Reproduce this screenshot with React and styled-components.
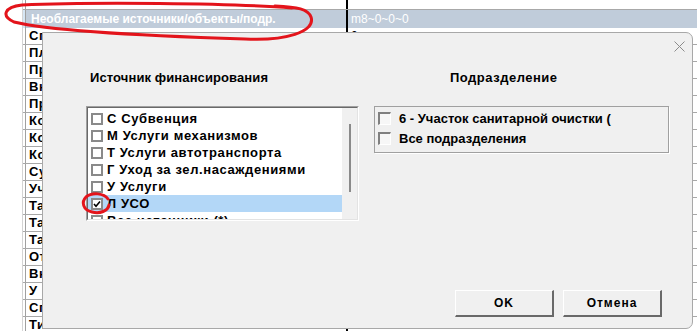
import React from 'react';
import styled, { createGlobalStyle } from 'styled-components';

const GlobalStyle = createGlobalStyle`
	html, body {
		margin: 0;
		padding: 0;
		background: #ffffff;
	}
	body {
		font-family: 'Liberation Sans', Arial, sans-serif;
	}
`;

const Page = styled.div`
	position: relative;
	width: 697px;
	height: 331px;
	overflow: hidden;
	background: #ffffff;
`;

const Grid = styled.div`
	display: flex;
	flex-direction: column;
	margin-top: -7px;
	margin-left: 22px;
	border-left: 1px solid #d4d4d4;
`;

const Row = styled.div`
	display: flex;
	box-sizing: border-box;
	border-bottom: ${(p) => (p.$head ? 'none' : '1px solid #a8a8a8')};
	background: ${(p) => (p.$head ? '#c0ccda' : '#ffffff')};
	height: ${(p) => (p.$head ? '18px' : '17px')};
`;

const LeadCell = styled.div`
	width: 2px;
	border-right: 1px solid #a0a0a0;
	background: ${(p) => (p.$head ? '#d6e6f4' : '#ffffff')};
`;

const Cell = styled.div`
	width: 320px;
	box-sizing: border-box;
	padding-left: ${(p) => (p.$head ? '5px' : '3px')};
	font-size: ${(p) => (p.$head ? '12px' : '13px')};
	font-weight: bold;
	letter-spacing: ${(p) => (p.$head ? '0' : '0.5px')};
	line-height: ${(p) => (p.$head ? '18px' : '16px')};
	color: ${(p) => (p.$head ? '#ffffff' : '#000000')};
	white-space: nowrap;
	overflow: hidden;
`;

const ValueCell = styled.div`
	flex: 1;
	border-left: 2px solid #000000;
	padding-left: 3px;
	font-size: 12px;
	line-height: ${(p) => (p.$head ? '18px' : '16px')};
	color: ${(p) => (p.$head ? '#ffffff' : '#000000')};
	white-space: nowrap;
`;

const Dialog = styled.div`
	position: absolute;
	left: 42px;
	top: 32px;
	width: 651px;
	height: 297px;
	box-sizing: border-box;
	border: 1px solid #a8a8a8;
	border-radius: 0 7px 7px 0;
	background: #f0f0f0;
	display: flex;
	flex-direction: column;
	font-family: 'Liberation Sans', Arial, sans-serif;
`;

const TitleBar = styled.div`
	height: 26px;
	display: flex;
	justify-content: flex-end;
	align-items: center;
	padding-right: 7px;
`;

const Body = styled.div`
	display: grid;
	grid-template-columns: 273px 295px;
	column-gap: 15px;
	row-gap: 21px;
	padding: 12px 0 0 43px;
`;

const Heading = styled.div`
	font-size: 13px;
	font-weight: bold;
	letter-spacing: ${(p) => p.$spacing}px;
	line-height: 14px;
	color: #000000;
	padding-left: ${(p) => p.$indent}px;
	white-space: nowrap;
`;

const ListBox = styled.div`
	height: 115px;
	box-sizing: border-box;
	border-top: 1px solid #a0a0a0;
	border-left: 1px solid #a0a0a0;
	border-right: 1px solid #ffffff;
	border-bottom: 1px solid #ffffff;
	display: flex;
	overflow: hidden;
`;

const ListInner = styled.div`
	flex: 1;
	display: flex;
	border-top: 1px solid #696969;
	border-left: 1px solid #696969;
	border-right: 1px solid #e3e3e3;
	border-bottom: 1px solid #e3e3e3;
	overflow: hidden;
`;

const ListItems = styled.div`
	flex: 1;
	background: #ffffff;
	padding-top: 2px;
	overflow: hidden;
`;

const Item = styled.div`
	display: flex;
	align-items: center;
	gap: 4px;
	height: 17px;
	padding-left: 3px;
	background: ${(p) => (p.$selected ? '#b3d7f7' : 'transparent')};
	font-size: 13px;
	font-weight: bold;
	letter-spacing: 0.6px;
	color: #000000;
	white-space: nowrap;
`;

const FlatBox = styled.span`
	width: 12px;
	height: 12px;
	box-sizing: border-box;
	border: 2px solid #8a8a8a;
	background: #ffffff;
	display: flex;
	align-items: center;
	justify-content: center;
	flex-shrink: 0;
`;

const ScrollTrack = styled.div`
	width: 15px;
	background: #f0f0f0;
	display: flex;
	justify-content: center;
	padding-top: 16px;
`;

const ScrollThumb = styled.div`
	width: 2px;
	height: 68px;
	background: #8a8a8a;
`;

const GroupBox = styled.div`
	height: 47px;
	box-sizing: border-box;
	border: 1px solid #a0a0a0;
	box-shadow: 1px 1px 0 #ffffff;
	padding: 5px 0 0 3px;
	display: flex;
	flex-direction: column;
	gap: 7px;
`;

const GroupItem = styled.div`
	display: flex;
	align-items: center;
	gap: 8px;
	height: 13px;
	font-size: 13px;
	font-weight: bold;
	color: #000000;
	white-space: nowrap;
`;

const SunkenBox = styled.span`
	width: 13px;
	height: 13px;
	box-sizing: border-box;
	border-top: 2px solid #808080;
	border-left: 2px solid #808080;
	border-right: 1px solid #ffffff;
	border-bottom: 1px solid #ffffff;
	background: #f7f7f7;
	flex-shrink: 0;
`;

const Footer = styled.div`
	margin-top: auto;
	display: flex;
	justify-content: flex-end;
	gap: 9px;
	padding: 0 30px 11px 0;
`;

const Button = styled.button`
	width: 99px;
	height: 27px;
	box-sizing: border-box;
	background: #f0f0f0;
	border-top: 1px solid #ffffff;
	border-left: 1px solid #ffffff;
	border-right: 2px solid #696969;
	border-bottom: 2px solid #696969;
	font-family: 'Liberation Sans', Arial, sans-serif;
	font-size: 12px;
	font-weight: bold;
	letter-spacing: 1px;
	color: #000000;
	padding: 0;
`;

const Marks = styled.svg`
	position: absolute;
	left: 0;
	top: 0;
	pointer-events: none;
`;

const leftRows = ['Сп', 'Пл', 'Пр', 'Вн', 'Пр', 'Ко', 'Ко', 'Ко', 'Су', 'Уч', 'Та', 'Та', 'Та', 'От', 'Вн', 'У', 'Сп', 'Ти'];

const sources = [
	{ label: 'С Субвенция' },
	{ label: 'М Услуги механизмов' },
	{ label: 'Т Услуги автотранспорта' },
	{ label: 'Г Уход за зел.насаждениями' },
	{ label: 'У Услуги' },
	{ label: 'Л УСО', checked: true },
	{ label: 'Все источники (*)' },
];

const Check = () => (
	<svg width="8" height="8" viewBox="0 0 8 8">
		<path d="M1 4 L3 6.2 L7 1.5" fill="none" stroke="#000" strokeWidth="1.6" />
	</svg>
);

const CloseIcon = () => (
	<svg width="11" height="11" viewBox="0 0 11 11">
		<path d="M0.5 0.5 L10.5 10.5 M10.5 0.5 L0.5 10.5" stroke="#8c8c8c" strokeWidth="1" />
	</svg>
);

const App = () => (
	<Page>
		<GlobalStyle />
		<Grid>
			<Row>
				<LeadCell />
				<Cell />
				<ValueCell />
			</Row>
			<Row $head>
				<LeadCell $head />
				<Cell $head>Необлагаемые источники/объекты/подр.</Cell>
				<ValueCell $head>m8~0~0~0</ValueCell>
			</Row>
			{leftRows.map((text, i) => (
				<Row key={i}>
					<LeadCell />
					<Cell>{text}</Cell>
					<ValueCell>{i === 0 ? '0' : ''}</ValueCell>
				</Row>
			))}
		</Grid>

		<Dialog>
			<TitleBar>
				<CloseIcon />
			</TitleBar>
			<Body>
				<Heading $indent={4} $spacing={0.1}>Источник финансирования</Heading>
				<Heading $indent={76} $spacing={0.5}>Подразделение</Heading>
				<ListBox>
					<ListInner>
						<ListItems>
							{sources.map((s) => (
								<Item key={s.label} $selected={s.checked}>
									<FlatBox>{s.checked && <Check />}</FlatBox>
									{s.label}
								</Item>
							))}
						</ListItems>
						<ScrollTrack>
							<ScrollThumb />
						</ScrollTrack>
					</ListInner>
				</ListBox>
				<GroupBox>
					<GroupItem>
						<SunkenBox />
						6 - Участок санитарной очистки (
					</GroupItem>
					<GroupItem>
						<SunkenBox />
						Все подразделения
					</GroupItem>
				</GroupBox>
			</Body>
			<Footer>
				<Button>OK</Button>
				<Button>Отмена</Button>
			</Footer>
		</Dialog>

		<Marks width="697" height="331" viewBox="0 0 697 331">
			<path
				d="M292 8 C230 3 90 2 22 5 C4 7 1 16 14 22 C50 31 150 36 245 39 C285 41 316 32 311 17 C308 9 298 7 275 6"
				fill="none"
				stroke="#e3141b"
				strokeWidth="3"
				strokeLinecap="round"
			/>
			<path
				d="M108 199 C104 193 92 192 86 197 C81 202 83 210 92 212 C100 214 108 211 109 205"
				fill="none"
				stroke="#e3141b"
				strokeWidth="3"
				strokeLinecap="round"
			/>
		</Marks>
	</Page>
);

export default App;
